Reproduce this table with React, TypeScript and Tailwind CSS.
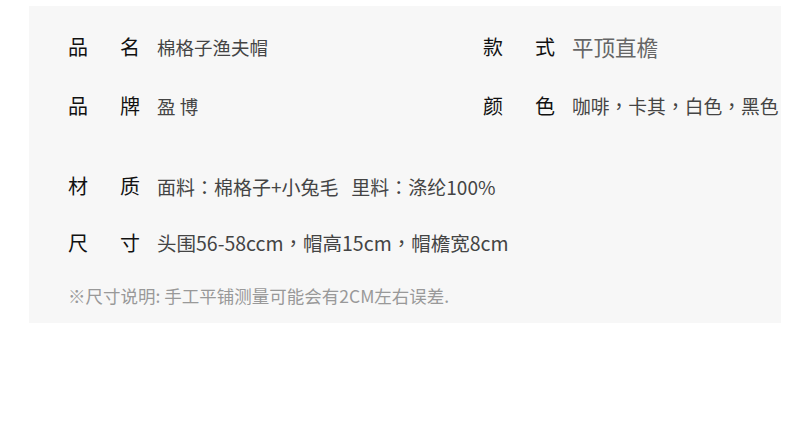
const font = { fontFamily: '"Noto Sans CJK SC", "Noto Sans", sans-serif' };
const tc = { fontFamily: '"Noto Sans CJK TC", "Noto Sans", sans-serif' };

function Label({ a, b }: { a: string; b: string }) {
  return (
    <div className="flex w-[89px] shrink-0 text-[20px] leading-none text-[#111]">
      <span className="w-[52px]">{a}</span>
      <span>{b}</span>
    </div>
  );
}

function Field({ a, b, value, valueClass }: { a: string; b: string; value: string; valueClass?: string }) {
  return (
    <div className="flex items-center">
      <Label a={a} b={b} />
      <span style={tc} className={valueClass ?? "text-[18.5px] leading-none text-[#444] whitespace-nowrap"}>
        {value}
      </span>
    </div>
  );
}

export default function App() {
  return (
    <div className="h-[441px] w-[800px] bg-white pt-[6px] pl-[29px]" style={font}>
      <div className="h-[317px] w-[752px] bg-[#f7f7f7] pl-[39px] pt-[31px]">
        <div className="flex h-[20px]">
          <div className="w-[415px]">
            <Field a="品" b="名" value="棉格子渔夫帽" />
          </div>
          <Field a="款" b="式" value="平顶直檐" valueClass="text-[21.5px] leading-none text-[#666] whitespace-nowrap" />
        </div>
        <div className="mt-[39px] flex h-[20px]">
          <div className="w-[415px]">
            <Field a="品" b="牌" value="盈 博" />
          </div>
          <Field a="颜" b="色" value="咖啡，卡其，白色，黑色" valueClass="text-[18.8px] leading-none text-[#444] whitespace-nowrap" />
        </div>
        <div className="mt-[60px] h-[20px]">
          <Field a="材" b="质" value="面料：棉格子+小兔毛   里料：涤纶100%" valueClass="text-[19px] leading-none text-[#444] whitespace-pre" />
        </div>
        <div className="mt-[37px] h-[20px]">
          <Field a="尺" b="寸" value="头围56-58ccm，帽高15cm，帽檐宽8cm" valueClass="text-[19.5px] leading-none text-[#444] whitespace-nowrap" />
        </div>
        <div className="mt-[34px] text-[17.5px] leading-none text-[#999] whitespace-nowrap">
          ※尺寸说明: 手工平铺测量可能会有2CM左右误差.
        </div>
      </div>
    </div>
  );
}
